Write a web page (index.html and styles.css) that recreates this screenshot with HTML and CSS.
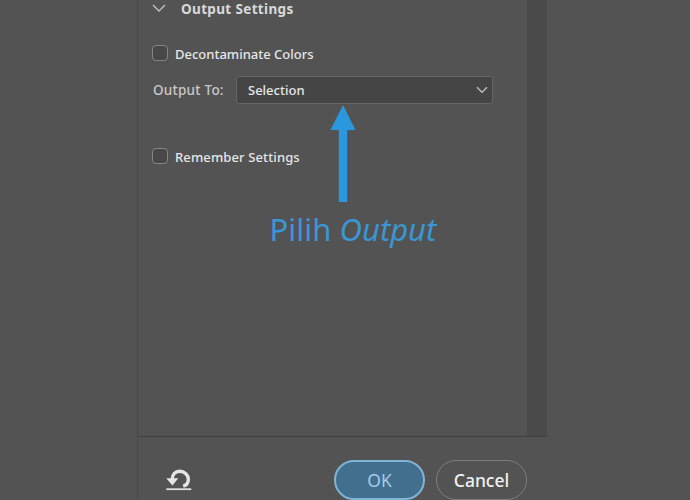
FILE: index.html
```html
<!DOCTYPE html>
<html lang="id">
<head>
    <meta charset="UTF-8">
    <title>Output Settings</title>
    <link rel="stylesheet" href="styles.css">
</head>
<body>
    <div class="panel">
        <div class="panel-body">
            <div class="settings">
                <div class="section-title">
                    <svg width="14" height="8" viewBox="0 0 14 8" fill="none" stroke="#c4c4c4" stroke-width="1.3">
                        <polyline points="1 1 7 7 13 1"></polyline>
                    </svg>
                    <h2>Output Settings</h2>
                </div>
                <label class="check-row">
                    <span class="checkbox"></span>
                    <span class="check-label">Decontaminate Colors</span>
                </label>
                <div class="output-row">
                    <span class="output-label">Output To:</span>
                    <div class="select">
                        <span>Selection</span>
                        <svg width="12" height="8" viewBox="0 0 12 8" fill="none" stroke="#bdbdbd" stroke-width="1.4">
                            <polyline points="1 1.3 6 6.3 11 1.3"></polyline>
                        </svg>
                    </div>
                </div>
                <label class="check-row remember">
                    <span class="checkbox"></span>
                    <span class="check-label">Remember Settings</span>
                </label>
            </div>
            <div class="scrollbar"></div>
        </div>
        <div class="footer">
            <svg class="reset" width="26" height="24" viewBox="0 0 26 24" fill="none">
                <path d="M6.2 11.5C6.2 6.3 9.4 3.3 13.6 3.3C18.8 3.3 22.3 7 22.3 11.2C22.3 14.6 20.6 17.2 17.2 18.2" stroke="#e6e6e6" stroke-width="3.4"></path>
                <path d="M0.3 10.2H12.3L6.4 17.4Z" fill="#e6e6e6"></path>
                <path d="M0.3 21.2H25.3" stroke="#dedede" stroke-width="1.8"></path>
            </svg>
            <button class="btn btn-ok">OK</button>
            <button class="btn btn-cancel">Cancel</button>
        </div>
    </div>

    <div class="note">
        <svg width="26" height="98" viewBox="0 0 26 98">
            <path d="M13 0L25.5 25H17.2V97H8.8V25H0.5Z" fill="#2b97dc"></path>
        </svg>
        <p>Pilih <em>Output</em></p>
    </div>
</body>
</html>
```
FILE: styles.css
```css
* {
    box-sizing: border-box;
}
body {
    margin: 0;
    height: 500px;
    overflow: hidden;
    background: #535353;
    color: #e6e6e6;
    font-family: "Noto Sans", "Open Sans", sans-serif;
    font-size: 13px;
}
.panel {
    width: 410px;
    height: 500px;
    margin-left: 137px;
    border-left: 1px solid #484848;
    display: flex;
    flex-direction: column;
}
.panel-body {
    height: 437px;
    display: flex;
    border-bottom: 1px solid #404040;
}
.settings {
    flex: 1;
    padding-left: 14px;
}
.scrollbar {
    width: 20px;
    background: #4a4a4a;
}
.section-title {
    display: flex;
    align-items: center;
    height: 18px;
    gap: 15px;
}
.section-title svg {
    margin-top: -2px;
}
h2 {
    margin: 0;
    font-size: 13.5px;
    line-height: 18px;
    font-weight: 700;
    letter-spacing: 0.35px;
    color: #d9d9d9;
}
.check-row {
    display: flex;
    align-items: center;
    height: 18px;
    margin-top: 27px;
    gap: 7px;
}
.checkbox {
    width: 16px;
    height: 16px;
    margin-top: -2px;
    border: 1px solid #858585;
    border-radius: 4px;
    background: #484848;
}
.check-label {
    font-weight: 500;
    line-height: 18px;
    white-space: nowrap;
}
.output-row {
    display: flex;
    align-items: center;
    height: 28px;
    margin-top: 13px;
}
.output-label {
    width: 84px;
    padding-left: 1px;
    font-size: 13.5px;
    font-weight: 500;
    letter-spacing: 0.25px;
    white-space: nowrap;
    color: #c8c8c8;
}
.select {
    width: 257px;
    height: 28px;
    padding: 0 4px 0 11px;
    display: flex;
    align-items: center;
    justify-content: space-between;
    border: 1px solid #666;
    border-radius: 3px;
    background: #454545;
    font-weight: 500;
}
.remember {
    margin-top: 44px;
}
.remember .check-label {
    letter-spacing: 0.12px;
}
.footer {
    flex: 1;
    display: flex;
    align-items: flex-start;
    padding: 23px 0 0 28px;
}
.reset {
    margin-top: 8px;
}
.btn {
    width: 91px;
    height: 40px;
    padding: 0;
    border-radius: 20px;
    font-family: inherit;
    font-size: 17.5px;
}
.btn-ok {
    margin-left: 142px;
    border: 2px solid #7eb4d6;
    background: #426f8e;
    color: #a3cbe6;
}
.btn-cancel {
    margin-left: 11px;
    border: 1px solid #7d7d7d;
    background: transparent;
    color: #f0f0f0;
    font-weight: 500;
}
/* arrow and caption laid over the panel */
.note {
    position: absolute;
    left: 252px;
    top: 105px;
    width: 202px;
    display: flex;
    flex-direction: column;
    align-items: center;
    color: #3a96d4;
}
.note svg {
    margin-right: 20px;
}
.note p {
    margin: 5px 0 0;
    font-size: 31px;
    line-height: 42px;
    white-space: nowrap;
}
```
